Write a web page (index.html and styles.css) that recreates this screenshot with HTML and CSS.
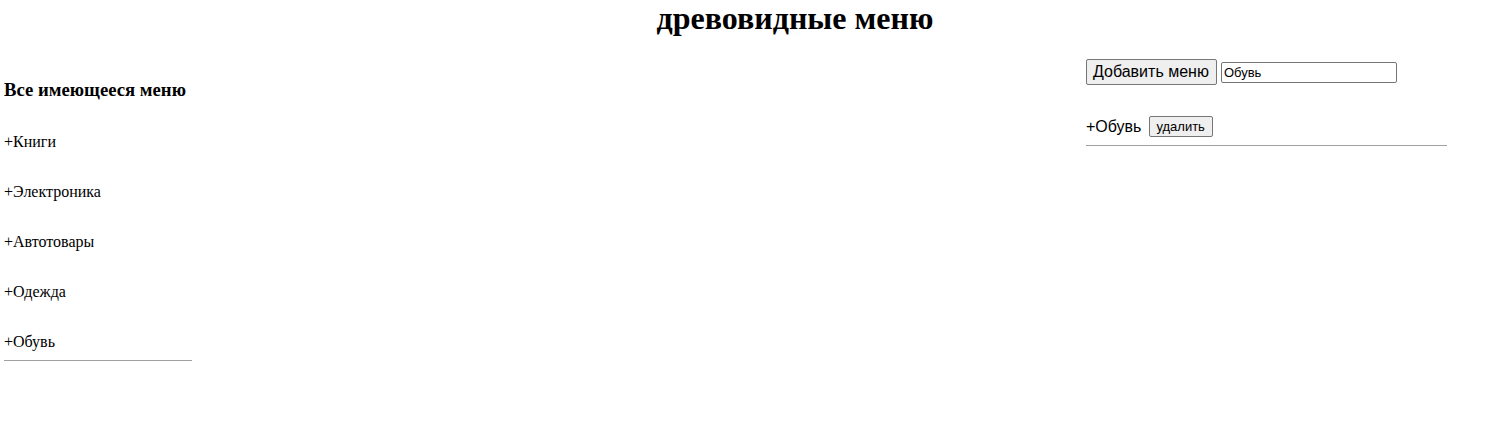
FILE: index.html
```html
<!DOCTYPE html>
<html lang="ru">
<head>
<meta charset="utf-8">
<title>древовидные меню</title>
<link rel="stylesheet" href="styles.css">
</head>
<body>
<header class="header">
  <h1 class="title">древовидные меню</h1>
</header>
<main class="layout">
  <section class="tree">
    <h3 class="tree-title">Все имеющееся меню</h3>
    <div class="tree-list">
      <div class="tree-item">+Книги</div>
      <div class="tree-item">+Электроника</div>
      <div class="tree-item">+Автотовары</div>
      <div class="tree-item">+Одежда</div>
      <div class="tree-item">+Обувь</div>
    </div>
    <hr class="rule">
  </section>
  <section class="editor">
    <div class="add-row">
      <button class="btn-add" type="button">Добавить меню</button>
      <input class="field" type="text" value="Обувь">
    </div>
    <div class="edit-row">
      <span class="edit-label">+Обувь</span>
      <button class="btn-del" type="button">удалить</button>
    </div>
    <hr class="rule">
  </section>
</main>
</body>
</html>
```
FILE: styles.css
```css
html, body { margin: 0; padding: 0; background: #fff; color: #000; }
body { font-family: "Liberation Serif", "Times New Roman", serif; font-size: 16px; }

.header { padding-left: 100px; padding-top: 2px; }
.title {
  margin: 0;
  text-align: center;
  font-size: 32px;
  line-height: 32px;
  font-weight: bold;
}

.layout {
  display: flex;
  justify-content: space-between;
  padding: 0 43px 0 4px;
}

.tree { width: 188px; padding-top: 45px; }
.tree-title { margin: 0; font-size: 18.72px; line-height: 22px; font-weight: bold; }
.tree-list { display: flex; flex-direction: column; gap: 32px; margin-top: 32px; }
.tree-item { line-height: 18px; }

.rule { margin: 9px 0 0; border: 0; border-top: 1px solid #a0a0a0; height: 0; }

.editor { width: 361px; padding-top: 25px; font-family: "Liberation Sans", Arial, sans-serif; }
.add-row { display: flex; align-items: center; gap: 4px; }
.btn-add {
  font-family: "Liberation Sans", Arial, sans-serif;
  font-size: 16px;
  height: 26px;
  padding: 1px 7px 1px 6px;
  border: 1px solid #767676;
  border-radius: 2px;
  background: #efefef;
  color: #000;
}
.field {
  font-family: "Liberation Sans", Arial, sans-serif;
  font-size: 13px;
  width: 176px;
  height: 21px;
  box-sizing: border-box;
  padding: 1px 2px;
  border: 1px solid #767676;
  border-radius: 2px;
  margin: 0;
}
.edit-row { display: flex; align-items: center; gap: 8px; margin-top: 31px; }
.edit-label { font-size: 16px; }
.btn-del {
  font-family: "Liberation Sans", Arial, sans-serif;
  font-size: 13px;
  height: 21px;
  padding: 1px 7px 1px 6px;
  border: 1px solid #767676;
  border-radius: 2px;
  background: #efefef;
  color: #000;
}
.editor .rule { margin-top: 8px; }
```
